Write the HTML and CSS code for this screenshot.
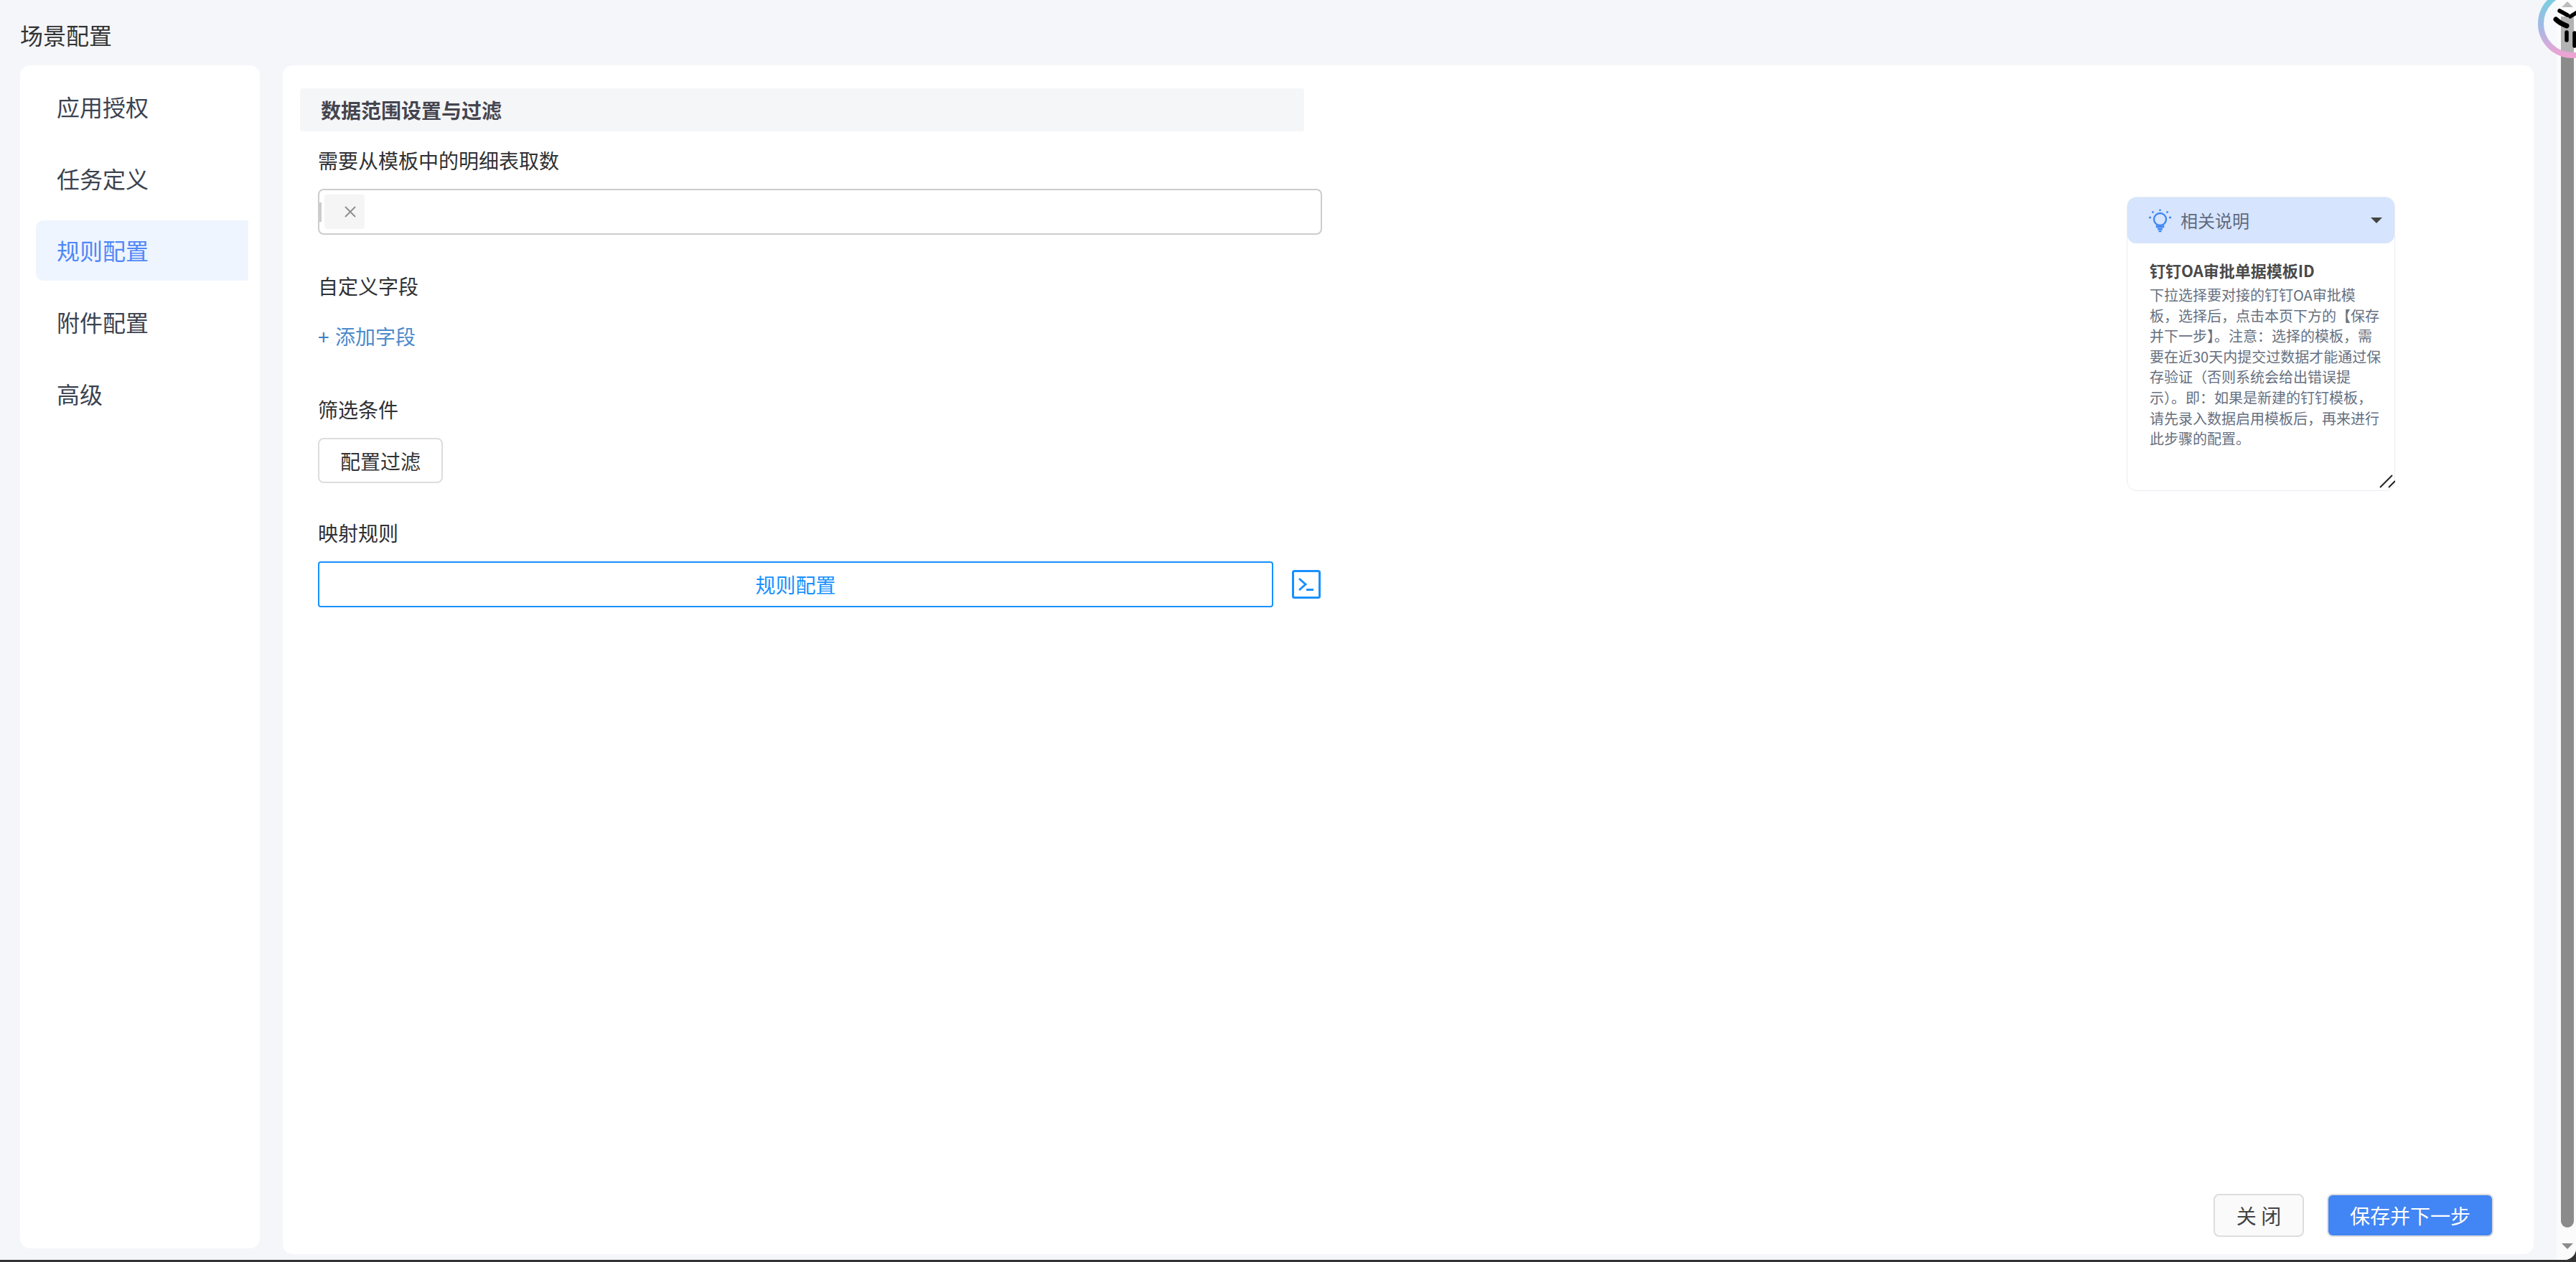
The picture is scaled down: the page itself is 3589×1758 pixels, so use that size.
FILE: index.html
```html
<!DOCTYPE html>
<html lang="zh-CN">
<head>
<meta charset="utf-8">
<title>场景配置</title>
<link rel="stylesheet" href="styles.css">
</head>
<body>
<div class="window">
  <div class="page">
    <h1 class="page-title">场景配置</h1>
    <div class="content">
      <nav class="sidebar">
        <a class="nav-item">应用授权</a>
        <a class="nav-item">任务定义</a>
        <a class="nav-item active">规则配置</a>
        <a class="nav-item">附件配置</a>
        <a class="nav-item">高级</a>
      </nav>
      <main class="card">
        <div class="card-body">
          <div class="form-col">
            <div class="section-head">数据范围设置与过滤</div>
            <div class="form">
              <div class="label label-1">需要从模板中的明细表取数</div>
              <div class="select">
                <span class="select-caret"></span>
                <span class="tag"><svg class="tag-x" viewBox="0 0 16 16" width="16" height="16"><path d="M1 1L15 15M15 1L1 15"/></svg></span>
              </div>
              <div class="label label-2">自定义字段</div>
              <a class="add-link"><span class="plus">+</span>添加字段</a>
              <div class="label label-3">筛选条件</div>
              <button class="btn btn-filter">配置过滤</button>
              <div class="label label-4">映射规则</div>
              <div class="rule-row">
                <button class="btn-rule">规则配置</button>
                <svg class="term-icon" viewBox="0 0 40 40" width="40" height="40">
                  <rect x="1.5" y="1.5" width="37" height="37" rx="2" class="term-box"/>
                  <path d="M10 12L19 20L10 28" class="term-line"/>
                  <rect x="20" y="26" width="10" height="3" class="term-fill"/>
                </svg>
              </div>
            </div>
          </div>
          <aside class="help">
            <div class="help-head">
              <svg class="bulb" viewBox="0 0 33 33" width="33" height="33">
                <circle cx="16.5" cy="14.5" r="8.5"/>
                <path d="M12 22.5V25H21V22.5M13 28H20M14.5 31H18.5M16.5 0.5V3M1 12H4M29 12H32M5.5 3.5L7.5 5.5M27.5 3.5L25.5 5.5"/>
              </svg>
              <span class="help-title">相关说明</span>
              <span class="help-caret"></span>
            </div>
            <div class="help-body">
              <div class="help-heading">钉钉OA审批单据模板ID</div>
              <p class="help-text">下拉选择要对接的钉钉OA审批模板，选择后，点击本页下方的【保存并下一步】。注意：选择的模板，需要在近30天内提交过数据才能通过保存验证（否则系统会给出错误提示）。即：如果是新建的钉钉模板，请先录入数据启用模板后，再来进行此步骤的配置。</p>
            </div>
            <svg class="resize" viewBox="0 0 22 20" width="22" height="20"><path d="M1 19L18 2M13 19L22 10"/></svg>
          </aside>
        </div>
        <footer class="footer">
          <button class="btn btn-close">关 闭</button>
          <button class="btn btn-save">保存并下一步</button>
        </footer>
      </main>
    </div>
  </div>
  <div class="scrollbar">
    <span class="arrow arrow-up"></span>
    <span class="thumb"></span>
    <span class="arrow arrow-down"></span>
  </div>
  <svg class="ball" viewBox="0 0 59 90" width="59" height="90">
    <defs>
      <linearGradient id="ring" x1="0" y1="0" x2="0" y2="1">
        <stop offset="0" stop-color="#6fd3de"/>
        <stop offset="0.55" stop-color="#a3b9e6"/>
        <stop offset="1" stop-color="#eea3d3"/>
      </linearGradient>
    </defs>
    <circle cx="54" cy="33" r="44" fill="#fff" fill-opacity="0.35" stroke="url(#ring)" stroke-width="8"/>
    <g class="ball-logo">
      <path d="M36 15L47 21"/>
      <path d="M51 23L59 18"/>
      <path d="M31 27C35 31 41 34 46 36" class="blade-thick"/>
      <path d="M46 45V56"/>
      <path d="M57 46V64"/>
    </g>
  </svg>
</div>
</body>
</html>
```

FILE: styles.css
```css
* { box-sizing: border-box; }
html, body { margin: 0; height: 100%; }
body {
  background: #333;
  font-family: "Noto Sans CJK SC", "Noto Sans", sans-serif;
  overflow: hidden;
}
.window {
  position: relative;
  display: flex;
  height: 1755px;
  background: #f5f6fa;
  border-bottom-right-radius: 16px;
  overflow: hidden;
}
.page {
  flex: 1;
  display: flex;
  flex-direction: column;
  min-width: 0;
  padding: 0 32px 8px 28px;
}
.page-title {
  margin: 0;
  height: 91px;
  padding-top: 26px;
  font-size: 32px;
  line-height: 44px;
  font-weight: 400;
  color: #333;
}
.content { flex: 1; display: flex; gap: 32px; min-height: 0; }
.sidebar {
  width: 334px;
  margin-bottom: 8px;
  padding: 16px 16px 0 22px;
  background: #fff;
  border-radius: 14px;
  display: flex;
  flex-direction: column;
  gap: 16px;
}
.nav-item {
  height: 84px;
  padding-left: 29px;
  font-size: 32px;
  line-height: 82px;
  color: #3c4350;
  border-radius: 10px 0 0 10px;
}
.nav-item.active { background: #eff5ff; color: #4f88f7; }
.card {
  flex: 1;
  min-width: 0;
  background: #fff;
  border-radius: 14px;
  display: flex;
  flex-direction: column;
}
.card-body { flex: 1; display: flex; justify-content: space-between; align-items: flex-start; padding: 32px 193px 0 24px; }
.form-col { width: 1399px; }
.section-head {
  height: 60px;
  padding-left: 29px;
  background: #f5f6f8;
  border-radius: 4px;
  font-size: 28px;
  line-height: 60px;
  font-weight: 700;
  color: #45454f;
}
.form { width: 1399px; margin-left: 25px; }
.label { font-size: 28px; line-height: 40px; color: #303133; }
.label-1 { margin-top: 20px; }
.label-2 { margin-top: 51px; }
.label-3 { margin-top: 62px; }
.label-4 { margin-top: 49px; }
.select {
  position: relative;
  width: 1399px;
  height: 64px;
  margin-top: 20px;
  padding: 6px 7px;
  border: 2px solid #ccc;
  border-radius: 8px;
  background: #fff;
}
.select-caret {
  position: absolute;
  left: -2px;
  top: 17px;
  width: 5px;
  height: 27px;
  background: #ccc;
}
.tag {
  display: flex;
  align-items: center;
  justify-content: flex-end;
  width: 56px;
  height: 48px;
  padding-right: 12px;
  background: #f5f5f5;
  border-radius: 4px;
}
.tag-x path { fill: none; stroke: #8c8c8c; stroke-width: 1.8; }
.add-link {
  display: block;
  margin-top: 30px;
  font-size: 28px;
  line-height: 40px;
  color: #4d8acb;
}
.plus { display: inline-block; width: 24px; color: #3f7fc4; }
.btn {
  font-family: inherit;
  font-size: 28px;
  line-height: 36px;
  border-radius: 8px;
  border: 2px solid #ddd;
  padding: 0;
  cursor: pointer;
}
.btn-filter {
  display: block;
  width: 174px;
  height: 63px;
  margin-top: 20px;
  background: #fff;
  color: #333;
}
.rule-row { display: flex; align-items: center; gap: 26px; width: 1397px; margin-top: 20px; }
.btn-rule {
  flex: 1;
  height: 64px;
  background: #fff;
  border: 2px solid #1890ff;
  border-radius: 4px;
  font-family: inherit;
  font-size: 28px;
  color: #1890ff;
  padding: 0;
}
.term-icon { flex: none; }
.term-box { fill: none; stroke: #1890ff; stroke-width: 3; }
.term-line { fill: none; stroke: #1890ff; stroke-width: 3; }
.term-fill { fill: #1890ff; }
.help {
  position: relative;
  width: 374px;
  height: 410px;
  margin-top: 151px;
  background: #fff;
  border: 1px solid #ececf4;
  border-radius: 14px;
}
.help-head {
  display: flex;
  align-items: center;
  gap: 12px;
  height: 64px;
  padding: 0 17px 0 29px;
  background: #d6e4fd;
  border-radius: 12px;
}
.bulb { fill: none; stroke: #3f87f5; stroke-width: 2.4; flex: none; }
.help-title { flex: 1; font-size: 24px; line-height: 36px; color: #5f6b7d; }
.help-caret {
  width: 0;
  height: 0;
  border-left: 8px solid transparent;
  border-right: 8px solid transparent;
  border-top: 8px solid #444;
}
.help-body { padding: 22px 16px 0 31px; }
.help-heading { font-size: 22px; line-height: 30px; font-weight: 700; color: #4a4a4a; }
.help-text { margin: 6px 0 0; font-size: 20px; line-height: 28.6px; color: #667080; }
.resize {
  position: absolute;
  right: -1px;
  bottom: 3px;
  fill: none;
  stroke: #222;
  stroke-width: 2;
}
.footer {
  display: flex;
  justify-content: flex-end;
  gap: 32px;
  padding: 0 56px 24px 0;
}
.btn-close { width: 126px; height: 60px; background: #fafafa; color: #444; }
.btn-save { width: 232px; height: 60px; background: #4285f4; color: #fff; }
.scrollbar {
  position: relative;
  flex: none;
  width: 27px;
  background: #fbfbfb;
}
.thumb {
  position: absolute;
  left: 6px;
  top: 23px;
  width: 18px;
  height: 1687px;
  background: #8b8b8b;
  border-radius: 0 0 9px 9px;
}
.arrow { position: absolute; left: 7px; width: 0; height: 0; border-left: 8px solid transparent; border-right: 8px solid transparent; }
.arrow-up { top: 2px; border-bottom: 8px solid #9a9a9a; }
.arrow-down { top: 1732px; border-top: 8px solid #8b8b8b; }
.ball { position: absolute; right: 0; top: 0; }
.ball-logo path { fill: none; stroke: #000; stroke-width: 5.5; stroke-linecap: round; }
.ball-logo .blade-thick { stroke-width: 7; }
```
